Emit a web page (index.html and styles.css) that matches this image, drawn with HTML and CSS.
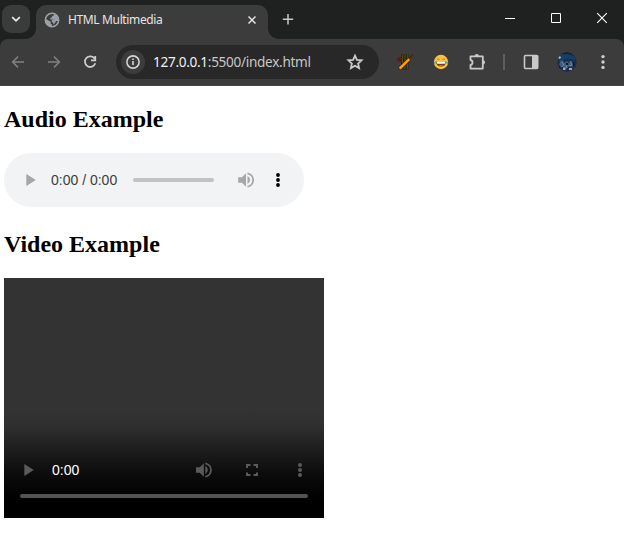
FILE: index.html
```html
<!DOCTYPE html>
<html lang="en">
<head>
<meta charset="utf-8">
<title>HTML Multimedia</title>
<link rel="stylesheet" href="styles.css">
</head>
<body>
<header class="browser">
  <div class="titlebar">
    <div class="tab-search"><svg width="28" height="28" viewBox="0 0 28 28"><path d="M10.2 12.2l3.8 3.6 3.8-3.6" fill="none" stroke="#e8e8e8" stroke-width="1.8"/></svg></div>
    <div class="tab">
      <svg class="globe" width="16" height="16" viewBox="0 0 16 16"><circle cx="8" cy="8" r="7.2" fill="#9aa0a6"/><path d="M10.2 1.7c.2 1.4-.5 2-1.700 2.100L7.600 5.600 6.300 6v1.500h4l1 1.500h2.900C13.500 12 11 14.200 8 14.300v-1.500L6.700 11.500V9.700L2 7C2.300 4.300 5 1.900 8 1.500z" fill="#3c3c3c"/><path d="M8.400 7.500l2.600 0 1 1.500-1 2-1.800 1.600V11L7.500 9.300z" fill="#9aa0a6"/><circle cx="8" cy="8" r="6.700" fill="none" stroke="#9aa0a6" stroke-width="1.400"/></svg>
      <span class="tab-title">HTML Multimedia</span>
      <svg class="tab-close" width="16" height="16" viewBox="0 0 16 16"><path d="M4.500 4.500l7 7M11.500 4.500l-7 7" stroke="#e3e3e3" stroke-width="1.500"/></svg>
    </div>
    <svg class="new-tab" width="16" height="16" viewBox="0 0 16 16"><path d="M8 3v10.500M2.800 8.200h10.400" stroke="#c7c7c7" stroke-width="1.500"/></svg>
    <div class="window-controls">
      <svg width="46" height="36" viewBox="0 0 46 36"><path d="M18 18.500h10" stroke="#fff"/></svg>
      <svg width="46" height="36" viewBox="0 0 46 36"><path d="M18.500 13.500h9v9h-9z" fill="none" stroke="#fff"/></svg>
      <svg width="46" height="36" viewBox="0 0 46 36"><path d="M18.200 13.200l9.600 9.600M27.800 13.200l-9.600 9.600" stroke="#fff" stroke-width="1.100"/></svg>
    </div>
  </div>
  <div class="toolbar">
    <svg class="tool" viewBox="0 0 36 36"><path d="M24 18H13M18 12.600L12.600 18l5.400 5.400" fill="none" stroke="#808080" stroke-width="1.500"/></svg>
    <svg class="tool" viewBox="0 0 36 36"><path d="M12 18h11M18 12.600l5.400 5.400-5.400 5.400" fill="none" stroke="#808080" stroke-width="1.500"/></svg>
    <svg class="tool" viewBox="0 0 36 36"><path d="M22.700 14.700A5.300 5.300 0 1 0 23.300 19.300M23.300 12v4.300H19" fill="none" stroke="#cfcfcf" stroke-width="1.700"/></svg>
    <div class="address">
      <div class="site-info"><svg width="24" height="24" viewBox="0 0 24 24"><circle cx="12" cy="12" r="6.100" fill="none" stroke="#d4d4d4" stroke-width="1.600"/><path d="M12 11v4M12 8.400v1.500" stroke="#d4d4d4" stroke-width="1.600"/></svg></div>
      <span class="url"><span class="host">127.0.0.1</span>:5500/index.html</span>
      <svg class="star" width="20" height="20" viewBox="0 0 20 20"><path d="M10 3.600l1.900 4.200 4.700.5-3.500 3.200 1 4.600-4.100-2.400-4.100 2.400 1-4.600-3.500-3.200 4.700-.5z" fill="none" stroke="#c9c9c9" stroke-width="1.800"/></svg>
    </div>
    <svg class="tool" viewBox="0 0 36 36"><path d="M14 10.500h7.500v15H14z" fill="#28260f"/><path d="M15.500 11v14M18 10.500v14.500M20.500 11v14" stroke="#57500f" stroke-width="1"/><circle cx="12.500" cy="15.300" r="2.400" fill="#60171b"/><path d="M22 15l4-4.500" stroke="#4a2811" stroke-width="1.800"/><path d="M12.500 24.700L22.500 15" stroke="#392405" stroke-width="4"/><path d="M12.700 24.500l9.600-9.400" stroke="#ff9c13" stroke-width="2.500"/></svg>
    <svg class="tool" viewBox="0 0 36 36"><circle cx="18" cy="18" r="7.200" fill="#f8c23c"/><path d="M14 15.500q1.200-1.200 2.500 0M19.500 15.500q1.200-1.200 2.500 0" fill="none" stroke="#98691d" stroke-width=".8"/><path d="M13.200 17.500h9.600q0 5-4.800 5t-4.800-5z" fill="#754018"/><path d="M13.700 17.500h8.600l-.5 2.300h-7.600z" fill="#fff"/><path d="M15.500 21.500q2.500-1.200 5 0-2.500 1.400-5 0z" fill="#ed5945"/><path d="M13.200 17.200q-2.800.5-2.300 2.500 1.800 1.200 2.300-2.500zM22.800 17.200q2.800.5 2.300 2.500-1.800 1.200-2.300-2.500z" fill="#46a8da"/></svg>
    <svg class="tool" viewBox="0 0 36 36"><path d="M11.500 12.300h12.300v12.300H11.500v-3.700a2.500 2.500 0 0 0 0-4.900z" fill="none" stroke="#c9c9c9" stroke-width="1.800" stroke-linejoin="round"/><path d="M15.700 12a2.100 2.100 0 0 1 4.200 0zM24 16.200a2.100 2.100 0 0 1 0 4.200z" fill="#c9c9c9"/></svg>
    <span class="divider"></span>
    <svg class="tool" viewBox="0 0 36 36"><rect x="11.500" y="11.500" width="13.200" height="13" rx="1" fill="none" stroke="#c9c9c9" stroke-width="1.600"/><path d="M19 11.500h5.800v13H19z" fill="#c9c9c9"/></svg>
    <svg class="tool" viewBox="0 0 36 36"><defs><clipPath id="face"><circle cx="18" cy="18" r="9.700"/></clipPath></defs><g clip-path="url(#face)"><path d="M8 8h20v20H8z" fill="#1b2d47"/><path d="M12 8h13v2H12z" fill="#182029"/><path d="M9 11q8-3 18 2l-1 3q-8-3-16 1z" fill="#173f66"/><circle cx="10.500" cy="13.500" r="1.300" fill="#a8c4dc"/><path d="M11 17l3-1 1 3 3-2 2 2 3-2 1 6-4-1-3 3-3-3-4 1z" fill="#3d5a80"/><path d="M13 18l2 3-3 2M21 17l2 4-3 1M17 21l1 3" fill="none" stroke="#7188a9" stroke-width="1"/><path d="M10 21l2 3-2 1zM17 19h2v2h-2zM24 18l2 2-2 3z" fill="#10192e"/><path d="M14 23.500h2.500v2.500H14zM20 24h3v2h-3z" fill="#b79fc0"/></g></svg>
    <svg class="tool" viewBox="0 0 36 36"><g fill="#cecece"><circle cx="18" cy="12.600" r="1.700"/><circle cx="18" cy="18" r="1.700"/><circle cx="18" cy="23.400" r="1.700"/></g></svg>
  </div>
</header>
<main class="page">
  <h2>Audio Example</h2>
  <div class="audio">
    <svg class="play" width="32" height="32" viewBox="0 0 32 32"><path d="M12.300 10v12l9.500-6z" fill="#a5a6a7"/></svg>
    <span class="audio-time">0:00 / 0:00</span>
    <span class="audio-track"></span>
    <svg class="audio-volume" width="24" height="24" viewBox="0 0 24 24"><path d="M4.200 9.300v5.400H8l4 4V5.300l-4 4zM13.500 8v8q2.500-1.200 2.500-4t-2.500-4z" fill="#a5a6a7"/><path d="M13.500 5.300A6.800 6.800 0 0 1 13.500 18.700" fill="none" stroke="#a5a6a7" stroke-width="1.800"/></svg>
    <svg class="audio-menu" width="24" height="24" viewBox="0 0 24 24"><g fill="#000"><circle cx="12" cy="7" r="1.900"/><circle cx="12" cy="12" r="1.900"/><circle cx="12" cy="17" r="1.900"/></g></svg>
  </div>
  <h2 class="video-heading">Video Example</h2>
  <div class="video">
    <div class="video-controls">
      <svg class="video-play" width="24" height="24" viewBox="0 0 24 24"><path d="M8.300 6v12l9.500-6z" fill="#5a5a5a"/></svg>
      <span class="video-time">0:00</span>
      <svg class="video-icon" viewBox="0 0 24 24"><path d="M4 9.300v5.400h3.800l4 4V5.300l-4 4zM13.300 8v8q2.500-1.200 2.500-4t-2.500-4z" fill="#5a5a5a"/><path d="M13.300 5.300A6.800 6.800 0 0 1 13.300 18.700" fill="none" stroke="#5a5a5a" stroke-width="1.800"/></svg>
      <svg class="video-icon" viewBox="0 0 24 24"><path d="M7 10V7h3.500M13.500 7H17v3M17 14.500V17h-3.500M10.500 17H7v-2.500" fill="none" stroke="#5a5a5a" stroke-width="2"/></svg>
      <svg class="video-icon" viewBox="0 0 24 24"><g fill="#5a5a5a"><circle cx="12" cy="7" r="2"/><circle cx="12" cy="12" r="2"/><circle cx="12" cy="17" r="2"/></g></svg>
    </div>
    <div class="video-track"></div>
  </div>
</main>
</body>
</html>
```
FILE: styles.css
```css
* { box-sizing: border-box; }
body { margin: 0; background: #fff; overflow: hidden; }
svg { display: block; flex-shrink: 0; }
.browser { background: #1f2120; font-family: "Noto Sans", sans-serif; }
.titlebar { display: flex; height: 39px; }
.tab-search { width: 28px; height: 28px; margin: 5px 6px 0 2px; border-radius: 9px; background: #3a3b3b; }
.tab { position: relative; display: flex; align-items: center; width: 232px; height: 34px; margin-top: 5px; padding: 0 8px; border-radius: 10px 10px 0 0; background: #3c3c3c; }
.tab::before, .tab::after { content: ""; position: absolute; bottom: 0; width: 10px; height: 10px; }
.tab::before { left: -10px; background: radial-gradient(circle at 0 0, transparent 9.5px, #3c3c3c 10px); }
.tab::after { right: -10px; background: radial-gradient(circle at 100% 0, transparent 9.5px, #3c3c3c 10px); }
.globe { margin-top: -5px; }
.tab-title { margin: -5px auto 0 8px; color: #e5e5e5; font-size: 12px; line-height: 18px; white-space: nowrap; letter-spacing: -.36px; }
.tab-close { margin-top: -5px; }
.new-tab { margin: 11px 0 0 12px; }
.window-controls { display: flex; margin: 0 -1px 0 auto; }
.toolbar { display: flex; align-items: center; height: 47px; padding-bottom: 1px; background: #3c3c3c; border-bottom: 1px solid #484646; border-radius: 8px 8px 0 0; }
.tool { width: 36px; height: 36px; }
.address { display: flex; align-items: center; flex: 0 0 263px; height: 34px; margin: 0 8px; padding: 0 14px 0 5px; border-radius: 17px; background: #282828; }
.site-info { border-radius: 50%; background: #3c3c3c; }
.url { margin: 0 auto 0 8px; color: #c7c7c7; font-size: 13.6px; line-height: 20px; white-space: nowrap; letter-spacing: -.31px; }
.host { color: #f1f1f1; }
.divider { width: 2px; height: 16px; margin: 0 8px; background: #5d5d5d; }
.page { padding: 20px 4px 0; }
h2 { margin: 0 0 20px; font: bold 24px/27px "Liberation Serif", serif; color: #000; }
.audio { display: flex; align-items: center; width: 300px; height: 54px; padding: 0 14px 0 10px; border-radius: 27px; background: #f1f3f4; }
.audio-time { width: 72px; margin-left: 5px; font: 14px/20px "Liberation Sans", sans-serif; color: #3c3d3e; white-space: nowrap; }
.audio-track { width: 81px; height: 4px; margin-left: 10px; border-radius: 2px; background: #c1c2c3; }
.audio-volume { margin-left: 20px; }
.audio-menu { margin-left: 8px; }
.video-heading { margin: 24px 0 20px; }
.video { display: flex; flex-direction: column; justify-content: flex-end; width: 320px; height: 240px; padding-bottom: 20px; background: linear-gradient(#333 0, #333 55%, #2f2f2f 62%, #202020 70%, #0b0b0b 82%, #000 93%); }
.video-controls { display: flex; align-items: center; gap: 24px; height: 48px; padding: 0 12px; }
.video-play { margin-right: -12px; }
.video-time { margin-right: auto; font: 14px/20px "Liberation Sans", sans-serif; color: #fff; }
.video-icon { width: 24px; height: 24px; }
.video-track { height: 4px; margin: 0 16px; border-radius: 2px; background: #535353; }
```
